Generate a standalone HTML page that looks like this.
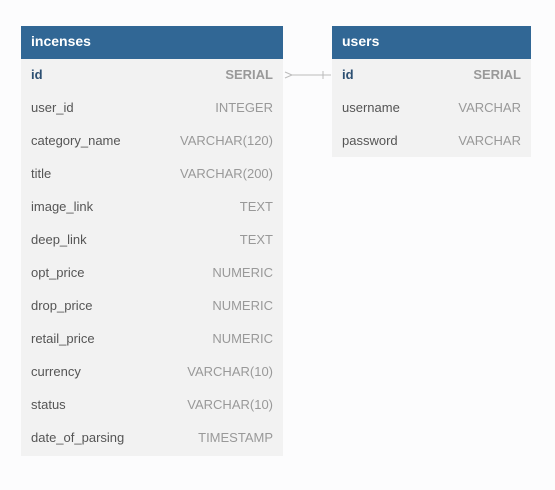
<!DOCTYPE html>
<html><head><style>
body{margin:0;width:555px;height:490px;background:#fcfcfd;font-family:"Liberation Sans",sans-serif;position:relative;overflow:hidden}
.t{position:absolute;background:#f2f2f2}
.h{background:#316795;color:#fff;font-weight:bold;font-size:14px;height:33px;line-height:31px;padding-left:10px;box-sizing:border-box}
.r{height:33px;line-height:31px;font-size:13px;color:#555;padding:0 10px;display:flex;justify-content:space-between}
.r span:last-child{color:#999}
.k span:first-child{color:#2c4f72;font-weight:bold}
.k span:last-child{font-weight:bold;color:#999}
</style></head><body>
<div class="t" style="left:21px;top:26px;width:262px;height:430px">
<div class="h">incenses</div>
<div class="r k"><span>id</span><span>SERIAL</span></div>
<div class="r"><span>user_id</span><span>INTEGER</span></div>
<div class="r"><span>category_name</span><span>VARCHAR(120)</span></div>
<div class="r"><span>title</span><span>VARCHAR(200)</span></div>
<div class="r"><span>image_link</span><span>TEXT</span></div>
<div class="r"><span>deep_link</span><span>TEXT</span></div>
<div class="r"><span>opt_price</span><span>NUMERIC</span></div>
<div class="r"><span>drop_price</span><span>NUMERIC</span></div>
<div class="r"><span>retail_price</span><span>NUMERIC</span></div>
<div class="r"><span>currency</span><span>VARCHAR(10)</span></div>
<div class="r"><span>status</span><span>VARCHAR(10)</span></div>
<div class="r"><span>date_of_parsing</span><span>TIMESTAMP</span></div>
</div>
<div class="t" style="left:332px;top:26px;width:199px;height:131px">
<div class="h">users</div>
<div class="r k"><span>id</span><span>SERIAL</span></div>
<div class="r"><span>username</span><span>VARCHAR</span></div>
<div class="r"><span>password</span><span>VARCHAR</span></div>
</div>
<svg style="position:absolute;left:283px;top:68px" width="50" height="14">
<path d="M2 4L9 7L2 10M9 7H48M40 3V11" stroke="#bbb" fill="none" stroke-width="1"/>
</svg>
</body></html>
